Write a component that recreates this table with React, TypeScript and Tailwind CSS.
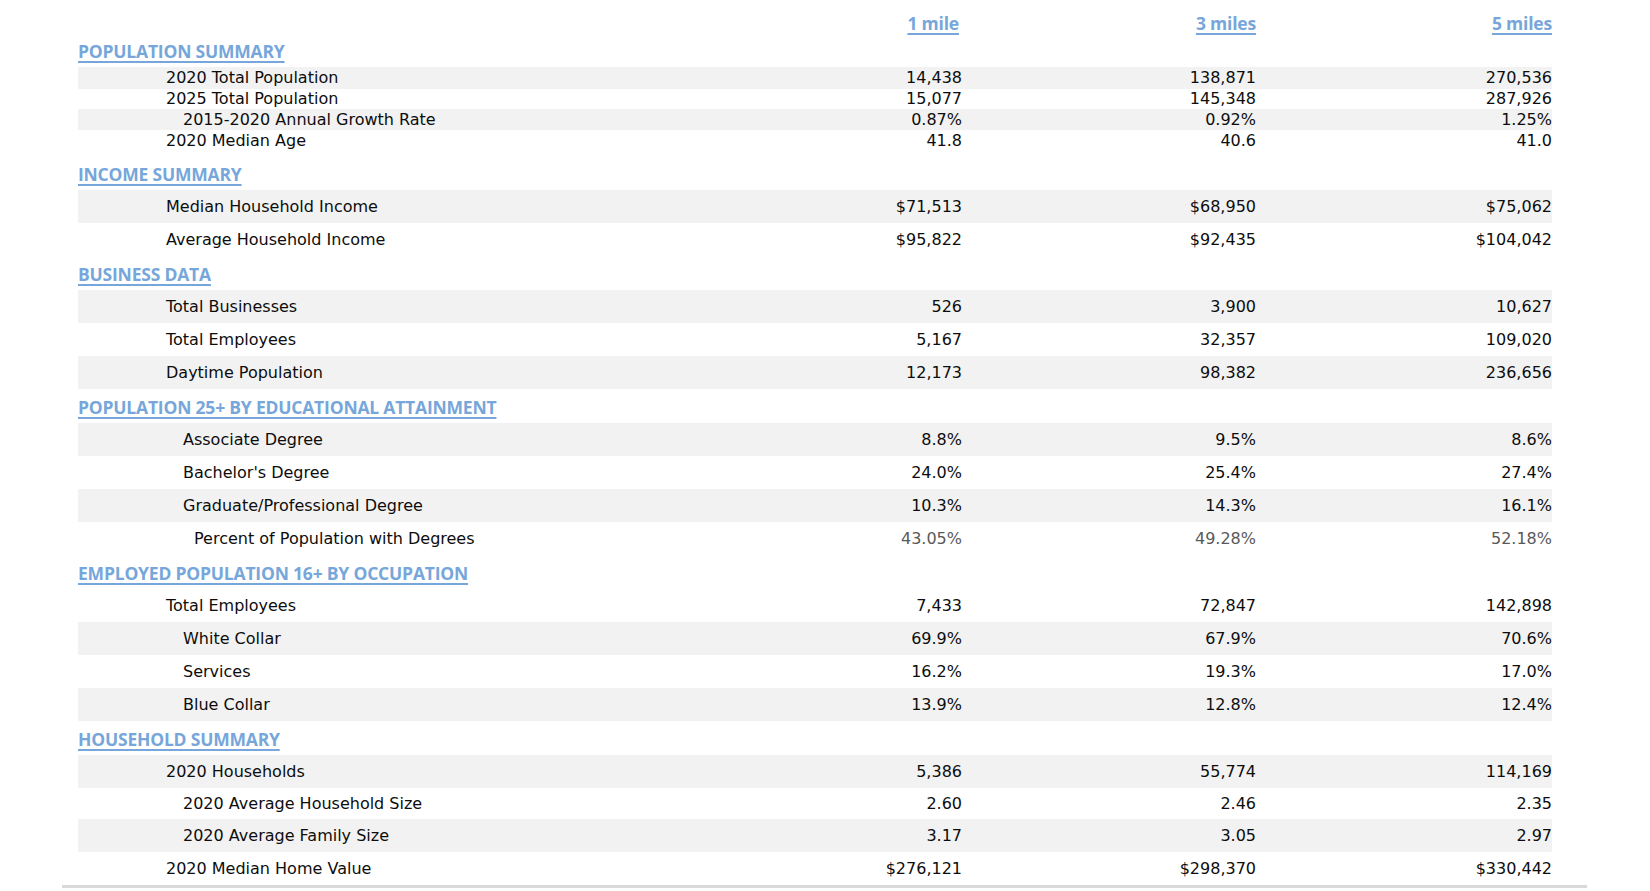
import React from "react";

type Row = {
  label: string;
  level: 1 | 2 | 3;
  values: [string, string, string];
  shaded: boolean;
  muted?: boolean;
};

type Section = {
  title: string;
  tight?: boolean;
  rows: Row[];
};

const sections: Section[] = [
  {
    title: "POPULATION SUMMARY",
    tight: true,
    rows: [
      { label: "2020 Total Population", level: 1, values: ["14,438", "138,871", "270,536"], shaded: true },
      { label: "2025 Total Population", level: 1, values: ["15,077", "145,348", "287,926"], shaded: false },
      { label: "2015-2020 Annual Growth Rate", level: 2, values: ["0.87%", "0.92%", "1.25%"], shaded: true },
      { label: "2020 Median Age", level: 1, values: ["41.8", "40.6", "41.0"], shaded: false },
    ],
  },
  {
    title: "INCOME SUMMARY",
    rows: [
      { label: "Median Household Income", level: 1, values: ["$71,513", "$68,950", "$75,062"], shaded: true },
      { label: "Average Household Income", level: 1, values: ["$95,822", "$92,435", "$104,042"], shaded: false },
    ],
  },
  {
    title: "BUSINESS DATA",
    rows: [
      { label: "Total Businesses", level: 1, values: ["526", "3,900", "10,627"], shaded: true },
      { label: "Total Employees", level: 1, values: ["5,167", "32,357", "109,020"], shaded: false },
      { label: "Daytime Population", level: 1, values: ["12,173", "98,382", "236,656"], shaded: true },
    ],
  },
  {
    title: "POPULATION 25+ BY EDUCATIONAL ATTAINMENT",
    rows: [
      { label: "Associate Degree", level: 2, values: ["8.8%", "9.5%", "8.6%"], shaded: true },
      { label: "Bachelor's Degree", level: 2, values: ["24.0%", "25.4%", "27.4%"], shaded: false },
      { label: "Graduate/Professional Degree", level: 2, values: ["10.3%", "14.3%", "16.1%"], shaded: true },
      { label: "Percent of Population with Degrees", level: 3, values: ["43.05%", "49.28%", "52.18%"], shaded: false, muted: true },
    ],
  },
  {
    title: "EMPLOYED POPULATION 16+ BY OCCUPATION",
    rows: [
      { label: "Total Employees", level: 1, values: ["7,433", "72,847", "142,898"], shaded: false },
      { label: "White Collar", level: 2, values: ["69.9%", "67.9%", "70.6%"], shaded: true },
      { label: "Services", level: 2, values: ["16.2%", "19.3%", "17.0%"], shaded: false },
      { label: "Blue Collar", level: 2, values: ["13.9%", "12.8%", "12.4%"], shaded: true },
    ],
  },
  {
    title: "HOUSEHOLD SUMMARY",
    rows: [
      { label: "2020 Households", level: 1, values: ["5,386", "55,774", "114,169"], shaded: true },
      { label: "2020 Average Household Size", level: 2, values: ["2.60", "2.46", "2.35"], shaded: false },
      { label: "2020 Average Family Size", level: 2, values: ["3.17", "3.05", "2.97"], shaded: true },
      { label: "2020 Median Home Value", level: 1, values: ["$276,121", "$298,370", "$330,442"], shaded: false },
    ],
  },
];

const grid = "grid grid-cols-[590px_294px_294px_296px]";
const headFont =
  "font-['Open_Sans','Lato',sans-serif] font-bold text-[17.5px] tracking-[-0.2px] leading-6 text-[#76a6da] underline decoration-[1.5px] underline-offset-[3px]";
const indent = { 1: "pl-[88px]", 2: "pl-[105px]", 3: "pl-[116px]" };
const tightHeights = ["h-[22px]", "h-[20px]", "h-[21px]", "h-[21px]"];
const rowHeights: Record<string, string[]> = {
  "HOUSEHOLD SUMMARY": ["h-[33px]", "h-[31px]", "h-[33px]", "h-[33px]"],
};

function DataRow({ row, height }: { row: Row; height: string }) {
  return (
    <div className={`${grid} ${height} items-center ${row.shaded ? "bg-[#f2f2f2]" : ""}`}>
      <div className={indent[row.level]}>{row.label}</div>
      {row.values.map((v, i) => (
        <div key={i} className={`text-right ${row.muted ? "text-[#595959]" : ""}`}>
          {v}
        </div>
      ))}
    </div>
  );
}

export default function App() {
  return (
    <div className="min-h-screen bg-white font-['DejaVu_Sans','Verdana',sans-serif] text-[16px] leading-5 text-[#0d0d0d]">
      <div className="ml-[62px] w-[1525px] border-b-[3px] border-[#d9d9d9] pl-4 pr-[35px]">
        {/* distance columns */}
        <div className={`${grid} h-[35px] items-end`}>
          <div />
          <div className="pr-[3px] text-right">
            <span className={headFont}>1 mile</span>
          </div>
          <div className="text-right">
            <span className={headFont}>3 miles</span>
          </div>
          <div className="text-right">
            <span className={headFont}>5 miles</span>
          </div>
        </div>

        {sections.map((s, si) => (
          <div key={s.title}>
            <div
              className={`flex items-end pb-1 ${
                si === 0 ? "h-[32px]" : si === 1 ? "h-[39px]" : "h-[34px]"
              }`}
            >
              <span className={headFont}>{s.title}</span>
            </div>
            {s.rows.map((r, ri) => (
              <DataRow
                key={r.label}
                row={r}
                height={
                  s.tight
                    ? tightHeights[ri]
                    : rowHeights[s.title]?.[ri] ?? "h-[33px]"
                }
              />
            ))}
          </div>
        ))}
      </div>
    </div>
  );
}
